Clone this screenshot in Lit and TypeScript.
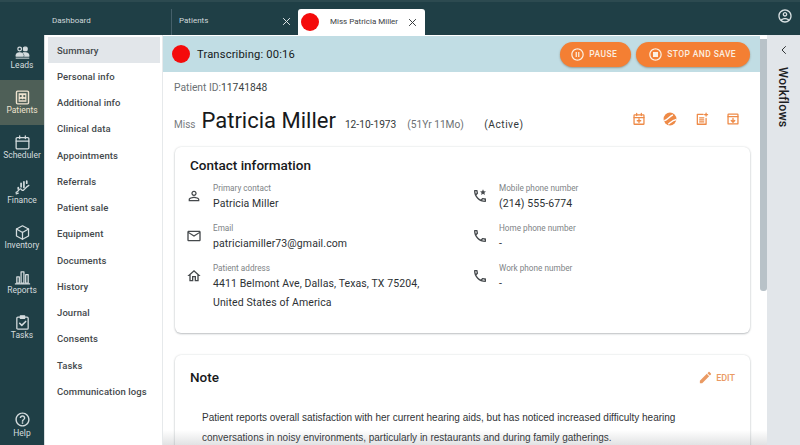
import { LitElement, html, css, svg } from "lit";
import { customElement } from "lit/decorators.js";

const ic = (body: unknown, size = 18) => html`<svg width=${size} height=${size} viewBox="0 0 24 24" fill="none" stroke="currentColor" stroke-width="1.8" stroke-linecap="round" stroke-linejoin="round">${body}</svg>`;
const mat = (d: string) => svg`<path d=${d} fill="currentColor" stroke="none"/>`;

const CIRCLE = "M12 2C6.48 2 2 6.48 2 12s4.48 10 10 10 10-4.48 10-10S17.52 2 12 2zm0 18c-4.41 0-8-3.59-8-8s3.59-8 8-8 8 3.59 8 8-3.59 8-8 8z";
const PHONE = "M6.54 5c.06.89.21 1.76.45 2.59l-1.2 1.2c-.41-1.2-.67-2.47-.76-3.79h1.51m9.86 12.02c.85.24 1.72.39 2.6.45v1.49c-1.32-.09-2.59-.35-3.8-.75l1.2-1.19M7.5 3H4c-.55 0-1 .45-1 1 0 9.39 7.61 17 17 17 .55 0 1-.45 1-1v-3.49c0-.55-.45-1-1-1-1.24 0-2.45-.2-3.57-.57-.1-.04-.21-.05-.31-.05-.26 0-.51.1-.71.29l-2.2 2.2c-2.83-1.45-5.15-3.76-6.59-6.59l2.2-2.2c.28-.28.36-.67.25-1.02C8.7 6.45 8.5 5.25 8.5 4c0-.55-.45-1-1-1z";

const icons: Record<string, unknown> = {
  leads: svg`<circle cx="8" cy="7" r="2.6"/><rect x="13.5" y="4.5" width="5" height="5" rx="1.5" fill="currentColor"/><path d="M3 17c0-3 2-4.500 5-4.500s5 1.500 5 4.500z" fill="currentColor"/><path d="M13 12.500h3c3 0 5 1.500 5 4.500h-6" fill="currentColor"/><path d="M3 20h18" stroke-width="1.4"/>`,
  patients: svg`<rect x="3.5" y="3" width="17" height="18" rx="1.5" stroke-width="2"/><rect x="6.5" y="6" width="11" height="12" fill="currentColor" stroke="none"/><circle cx="9.5" cy="10" r="1.6" fill="#4f5f58" stroke="none"/><circle cx="14.5" cy="10" r="1.6" fill="#4f5f58" stroke="none"/><path d="M7.500 16c0-3 4-3 4.500-1 .5-2 4.500-2 4.500 1z" fill="#4f5f58" stroke="none"/>`,
  scheduler: svg`<rect x="3" y="5" width="18" height="16" rx="1.5"/><path d="M3 10h18M8 2.500v4M16 2.500v4"/>`,
  finance: svg`<path d="M3 19c3-1 4-5 6-5s2 3 4 2 4-5 8-7"/><path d="M10 11V6M14 12V4M18 6V3M6 14v-2" stroke-width="2.4"/><path d="M3 21l3-1"/>`,
  inventory: svg`<path d="M12 2.500 20.500 7v10L12 21.500 3.500 17V7z"/><path d="M3.500 7 12 12l8.500-5M12 12v9.500"/>`,
  reports: svg`<path d="M4 20V11h3.500v9zM10 20V4h4v16zM16.500 20V8H20v12z"/><path d="M2 21h20"/>`,
  tasks: svg`<rect x="4" y="4.5" width="16" height="17" rx="1.5"/><rect x="9" y="2.5" width="6" height="3.5" fill="currentColor"/><path d="m8 13 3 3 5.500-5.500" stroke-width="2.2"/>`,
  help: mat("M11 18h2v-2h-2v2zm1-16C6.48 2 2 6.48 2 12s4.48 10 10 10 10-4.48 10-10S17.52 2 12 2zm0 18c-4.41 0-8-3.59-8-8s3.59-8 8-8 8 3.59 8 8-3.59 8-8 8zm0-14c-2.21 0-4 1.79-4 4h2c0-1.1.9-2 2-2s2 .9 2 2c0 2-3 1.750-3 5h2c0-2.250 3-2.500 3-5 0-2.210-1.790-4-4-4z"),
  user: mat("M12 5.900c1.160 0 2.100.94 2.100 2.100s-.94 2.100-2.100 2.100S9.900 9.160 9.900 8s.94-2.100 2.100-2.100m0 9c2.970 0 6.100 1.460 6.100 2.100v1.100H5.900V17c0-.64 3.130-2.100 6.100-2.100M12 4C9.790 4 8 5.790 8 8s1.790 4 4 4 4-1.790 4-4-1.790-4-4-4zm0 9c-2.670 0-8 1.340-8 4v3h16v-3c0-2.660-5.330-4-8-4z"),
  mail: mat("M22 6c0-1.100-.9-2-2-2H4c-1.100 0-2 .9-2 2v12c0 1.100.9 2 2 2h16c1.100 0 2-.9 2-2V6zm-2 0l-8 5-8-5h16zm0 12H4V8l8 5 8-5v10z"),
  home: mat("M12 5.690l5 4.500V18h-2v-6H9v6H7v-7.810l5-4.500M12 3L2 12h3v8h6v-6h2v6h6v-8h3L12 3z"),
  starphone: svg`${mat(PHONE)}<path d="m16.500 2 1.300 2.900 3.200.3-2.400 2.100.7 3.100-2.800-1.600-2.800 1.600.7-3.100L12 5.200l3.200-.3z" fill="currentColor" stroke="none"/>`,
  phone: mat(PHONE),
};

const rail = [["Leads", "leads"], ["Patients", "patients"], ["Scheduler", "scheduler"], ["Finance", "finance"], ["Inventory", "inventory"], ["Reports", "reports"], ["Tasks", "tasks"]];
const menu = ["Summary", "Personal info", "Additional info", "Clinical data", "Appointments", "Referrals", "Patient sale", "Equipment", "Documents", "History", "Journal", "Consents", "Tasks", "Communication logs"];

@customElement("app-root")
export class AppRoot extends LitElement {
  static styles = css`
    :host { display: block; width: 800px; height: 445px; overflow: hidden; font-family: Roboto, "Liberation Sans", sans-serif; color: #2b3033; background: #fff; }
    * { box-sizing: border-box; }
    svg { display: block; flex: none; }
    .top { height: 35px; background: #1f3f46; border-top: 2px solid #2c4a50; display: flex; align-items: flex-end; color: #cfd8da; font-size: 8px; position: relative; }
    .t1 { width: 171px; padding-left: 52px; height: 26px; line-height: 24px; }
    .t2 { width: 127px; height: 26px; border-left: 1px solid #45606a; display: flex; padding: 0 7px; line-height: 24px; justify-content: space-between; }
    .tx { display: flex; height: 24px; align-items: center; color: #e4e9ea; }
    .t3 { width: 127px; height: 26px; background: #fff; border-radius: 3px 3px 0 0; color: #3b4043; display: flex; align-items: center; padding: 0 8px 0 3px; line-height: 24px; }
    .t3 .dot { margin-right: 11px; }
    .t3 .tl { flex: 1; font-size: 8px; }
    .t3 .tx { color: #33383a; }
    .acct { position: absolute; right: 7px; top: 6px; color: #d8e0e2; }
    .dot { width: 18px; height: 18px; border-radius: 50%; background: #f40b0b; flex: none; }
    .body { display: flex; height: 410px; }
    .rail { width: 44px; background: #1f3f46; color: #d4dcde; display: flex; flex-direction: column; font-size: 8.5px; line-height: 9px; flex: none; }
    .ri { height: 45px; display: flex; flex-direction: column; align-items: center; padding-top: 9px; }
    .ri.on { background: #4e5f57; color: #efe3cf; }
    .ri.help { margin-top: auto; height: 44px; padding-top: 10px; }
    .ri.help span { margin-top: 1px; }
    .sub { width: 119px; flex: none; border-left: 1px solid #d9dee0; padding: 2px 2px 0 3px; border-right: 1px solid #e6e9eb; }
    .mi { height: 26.25px; display: flex; align-items: center; padding-left: 9px; font-size: 9.5px; font-weight: 500; color: #44494c; letter-spacing: .1px; }
    .mi.on { background: #e2e6ea; }
    .main { width: 604px; flex: none; display: flex; position: relative; }
    .col { width: 597px; flex: none; padding-top: 1px; }
    .banner { height: 36px; background: #c1dde4; display: flex; align-items: center; padding: 0 10px 0 9px; }
    .banner .txt { font-size: 11.2px; color: #15191b; margin-left: 7px; flex: 1; letter-spacing: .15px; }
    .btn { height: 25px; border-radius: 13px; background: #f47f33; color: #fbeee0; font-size: 8.5px; font-weight: 500; letter-spacing: .4px; display: flex; align-items: center; gap: 4px; padding: 0 14px 0 10px; margin-left: 5px; box-shadow: 0 1px 2px rgba(90,60,30,.4); }
    .btn.s { padding-left: 12px; }
    .pid { font-size: 10.3px; color: #6c7174; padding: 9px 0 0 11px; height: 24px; }
    .pid b { font-weight: 400; color: #3a3f42; }
    .name { display: flex; align-items: baseline; padding: 12px 20px 0 11px; height: 40px; font-size: 10.2px; color: #33383a; }
    .name .miss { font-size: 10px; color: #777c7f; margin-right: 6px; }
    .name .big { font-size: 22px; color: #17191b; margin-right: 9px; }
    .name .age { color: #6c7174; margin: 0 0 0 11px; width: 77px; }
    .name .st { letter-spacing: .5px; }
    .acts { margin-left: auto; display: flex; gap: 17.4px; color: #ee8a47; align-self: center; margin-top: -6px; }
    .acts svg { stroke-width: 2.2; }
    .card { margin: 0 10px 0 12px; background: #fff; border-radius: 6px; box-shadow: 0 0 2px rgba(60,70,80,.18), 0 1px 2px rgba(60,70,80,.3); }
    .contact { height: 186px; margin-top: 11px; padding: 10px 15px; }
    .contact h2, .note h2 { font-size: 13.5px; font-weight: 500; color: #17191b; margin: 0; line-height: 17px; }
    .grid { display: grid; grid-template-columns: 284px 1fr; margin-top: 6px; }
    .row { display: flex; height: 40px; }
    .row .i { width: 27px; padding-top: 8px; color: #45494c; flex: none; }
    .c1 .i { margin-left: -4px; }
    .c2 .i { margin-left: -2px; }
    .lab { font-size: 8.2px; color: #7e8386; line-height: 12px; margin-top: 2px; }
    .val { font-size: 10.5px; color: #2d3134; line-height: 19px; letter-spacing: .1px; }
    .note { height: 100px; margin-top: 22px; padding: 14px 15px 0; }
    .nh { display: flex; justify-content: space-between; align-items: center; }
    .edit { display: flex; align-items: center; gap: 3px; color: #ea9a63; font-size: 9px; font-weight: 500; }
    .nt { font-family: "Liberation Sans", sans-serif; font-size: 10px; color: #2f3336; line-height: 20px; margin: 22px 0 0 12px; }
    .fade { position: absolute; left: 0; right: 0; bottom: 0; height: 15px; background: linear-gradient(rgba(120,125,130,0), rgba(120,125,130,.22)); pointer-events: none; }
    .track { width: 7px; padding-top: 4px; flex: none; }
    .thumb { height: 252px; background: #b8c2c8; border-radius: 0 0 3px 3px; }
    .wf { width: 33px; flex: none; background: #e2e6ea; display: flex; flex-direction: column; align-items: center; padding-top: 9px; color: #1d2123; }
    .wf span { writing-mode: vertical-rl; font-size: 12.5px; font-weight: 500; margin-top: 11px; letter-spacing: .12px; }
  `;

  private field(icon: string, label: string, val: unknown) {
    return html`<div class="row"><div class="i">${ic(icons[icon], 16)}</div><div><div class="lab">${label}</div><div class="val">${val}</div></div></div>`;
  }

  render() {
    const x = html`<svg width="9" height="9" viewBox="0 0 12 12" fill="none" stroke="currentColor" stroke-width="1.3"><path d="m1.500 1.500 9 9m0-9-9 9"/></svg>`;
    return html`
      <div class="top">
        <div class="t1">Dashboard</div>
        <div class="t2"><span>Patients</span><span class="tx">${x}</span></div>
        <div class="t3"><span class="dot"></span><span class="tl">Miss Patricia Miller</span><span class="tx">${x}</span></div>
        <div class="acct">${ic(svg`${mat("M12 2C6.48 2 2 6.48 2 12s4.48 10 10 10 10-4.48 10-10S17.52 2 12 2zM7.35 18.500C8.66 17.56 10.26 17 12 17s3.340.56 4.650 1.500C15.340 19.440 13.740 20 12 20s-3.340-.56-4.650-1.500zm10.790-1.380C16.450 15.800 14.320 15 12 15s-4.450.8-6.140 2.120C4.700 15.730 4 13.950 4 12c0-4.420 3.580-8 8-8s8 3.580 8 8c0 1.950-.7 3.730-1.860 5.120z")}${mat("M12 6c-1.930 0-3.500 1.570-3.500 3.500S10.070 13 12 13s3.500-1.570 3.500-3.500S13.930 6 12 6zm0 5c-.83 0-1.500-.67-1.500-1.500S11.170 8 12 8s1.500.67 1.500 1.500S12.830 11 12 11z")}`, 16)}</div>
      </div>
      <div class="body">
        <nav class="rail">
          ${rail.map(([l, i]) => html`<div class="ri ${l === "Patients" ? "on" : ""}">${ic(icons[i], 17)}<span>${l}</span></div>`)}
          <div class="ri help">${ic(icons.help, 17)}<span>Help</span></div>
        </nav>
        <div class="sub">${menu.map((m, i) => html`<div class="mi ${i === 0 ? "on" : ""}">${m}</div>`)}</div>
        <div class="main">
          <div class="col">
            <div class="banner">
              <span class="dot"></span><span class="txt">Transcribing: 00:16</span>
              <div class="btn">${ic(svg`${mat(CIRCLE)}${mat("M9 8h2v8H9zM13 8h2v8h-2z")}`, 15)}PAUSE</div>
              <div class="btn s">${ic(svg`${mat(CIRCLE)}${mat("M8 8h8v8H8z")}`, 15)}STOP AND SAVE</div>
            </div>
            <div class="pid">Patient ID:<b>11741848</b></div>
            <div class="name">
              <span class="miss">Miss</span><span class="big">Patricia Miller</span><span>12-10-1973</span><span class="age">(51Yr 11Mo)</span><span class="st">(Active)</span>
              <div class="acts">
                ${ic(svg`<rect x="3.5" y="5" width="17" height="16" rx="1"/><path d="M3.500 9.500h17M8 2.500V6M16 2.500V6M12 12v6M9 15h6"/>`, 14)}
                ${html`<svg width="14" height="14" viewBox="0 0 24 24"><circle cx="12" cy="12" r="11" fill="currentColor"/><path d="M2 15c6-1 8-7 15-10M9 21c4-3 7-7 14-8" stroke="#fff" stroke-width="2.5" fill="none"/></svg>`}
                ${ic(svg`<path d="M14 4H4v17h15V11M8 10h7M8 13.500h7M8 17h7"/><path d="M19 2v5M16.500 4.500h5"/>`, 14)}
                ${ic(svg`<rect x="3.5" y="3.5" width="17" height="17" rx="1"/><path d="M3.500 8h17M12 11v6M9 14.500l3 3 3-3"/>`, 14)}
              </div>
            </div>
            <section class="card contact">
              <h2>Contact information</h2>
              <div class="grid">
                <div class="c1">
                  ${this.field("user", "Primary contact", "Patricia Miller")}
                  ${this.field("mail", "Email", "patriciamiller73@gmail.com")}
                  ${this.field("home", "Patient address", html`4411 Belmont Ave, Dallas, Texas, TX 75204,<br />United States of America`)}
                </div>
                <div class="c2">
                  ${this.field("starphone", "Mobile phone number", "(214) 555-6774")}
                  ${this.field("phone", "Home phone number", "-")}
                  ${this.field("phone", "Work phone number", "-")}
                </div>
              </div>
            </section>
            <section class="card note">
              <div class="nh"><h2>Note</h2><div class="edit">${ic(mat("M3 17.250V21h3.750L17.810 9.940l-3.750-3.750L3 17.250zM20.710 7.040c.39-.39.39-1.020 0-1.410l-2.340-2.340c-.39-.39-1.020-.39-1.410 0l-1.830 1.830 3.750 3.750 1.830-1.830z"), 15)}EDIT</div></div>
              <p class="nt">Patient reports overall satisfaction with her current hearing aids, but has noticed increased difficulty hearing conversations in noisy environments, particularly in restaurants and during family gatherings.</p>
            </section>
          </div>
          <div class="track"><div class="thumb"></div></div>
          <div class="fade"></div>
        </div>
        <aside class="wf">${ic(svg`<path d="m15 5-7 7 7 7"/>`, 12)}<span>Workflows</span></aside>
      </div>
    `;
  }
}
